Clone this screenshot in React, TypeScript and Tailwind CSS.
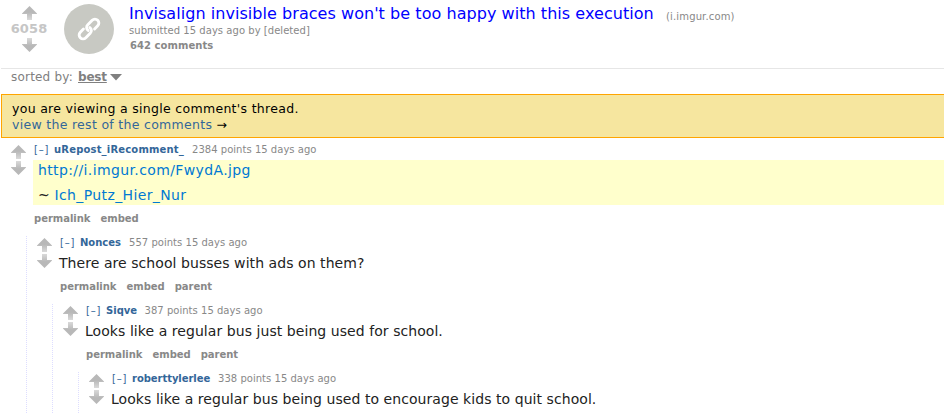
import type { ReactNode } from "react";

function Arrow({ down = false }: { down?: boolean }) {
  return (
    <svg width="15" height="14" viewBox="0 0 15 14" className={down ? "block rotate-180" : "block"}>
      <defs>
        <linearGradient id="stem" x1="0" y1="0" x2="0" y2="1">
          <stop offset="0.45" stopColor="#b8b8b8" />
          <stop offset="1" stopColor="#dadada" />
        </linearGradient>
      </defs>
      <path d="M7.5 0L15 7.5V8H10V14H5V8H0V7.5Z" fill="url(#stem)" />
    </svg>
  );
}

type CommentProps = {
  author: string;
  authorClass: string;
  meta: string;
  actions?: string[];
  root?: boolean;
  body: ReactNode;
  children?: ReactNode;
};

function Comment({ author, authorClass, meta, actions = [], root = false, body, children }: CommentProps) {
  return (
    <div>
      <div className={root ? "flex pl-[11px]" : "flex pl-[10px]"}>
        <div className="flex w-[15px] shrink-0 flex-col gap-[2px] pt-[2px]">
          <Arrow />
          <Arrow down />
        </div>
        <div className="min-w-0 flex-1 pl-[7px]">
          <div className="flex h-[13px] items-center pl-px text-[10px] leading-[13px] text-[#888]">
            <span className="w-[20px] tracking-[0.8px] text-[#369]">[–]</span>
            <span className={`font-bold text-[#369] ${authorClass}`}>{author}</span>
            <span className="tracking-[0.03px]">{meta}</span>
          </div>
          {body}
          <div className="flex h-[18px] items-center gap-[10px] pl-px text-[10px] font-bold tracking-[-0.02px] text-[#888]">
            {actions.map((action) => (
              <span key={action}>{action}</span>
            ))}
          </div>
        </div>
      </div>
      {children && (
        <div className={`mt-[9px] border-l border-dotted border-[#ddf] ${root ? "ml-[26px]" : "ml-[25px]"}`}>{children}</div>
      )}
    </div>
  );
}

function Line({ children }: { children: ReactNode }) {
  return <div className="flex h-[28px] items-center text-[14px] tracking-[0.06px] text-[#222]">{children}</div>;
}

export default function App() {
  return (
    <div className="h-[413px] w-[944px] overflow-hidden whitespace-nowrap bg-white font-['DejaVu_Sans',Verdana,sans-serif]">
      <header className="ml-px flex h-[69px] border-b border-[#e6e6e6]">
        <div className="ml-[6px] flex w-[44px] flex-col items-center pt-[6px]">
          <Arrow />
          <span className="flex h-[18px] items-center text-[13px] font-bold tracking-[0.1px] text-[#c6c6c6]">6058</span>
          <Arrow down />
        </div>
        <div className="ml-[13px] mt-1 flex size-[50px] items-center justify-center rounded-full bg-[#c8c9c3]">
          <svg width="30" height="30" viewBox="-15 -15 30 30" fill="none" stroke="#fff" strokeWidth="2.9" strokeLinecap="round">
            <g transform="rotate(-45)">
              <path d="M4 3.9H8.4A3.9 3.9 0 0 0 8.4 -3.9H2.2A3.9 3.9 0 0 0 -1.7 0.4" />
              <path d="M-4 -3.9H-8.4A3.9 3.9 0 0 0 -8.4 3.9H-2.2A3.9 3.9 0 0 0 1.7 -0.4" />
            </g>
          </svg>
        </div>
        <div className="ml-[15px] pt-1">
          <div className="flex h-[20px] items-center">
            <span className="w-[537px] text-[16px] tracking-[0.05px] text-[#0000ff]">Invisalign invisible braces won't be too happy with this execution</span>
            <span className="pt-1 text-[10px] tracking-[0.15px] text-[#888]">(i.imgur.com)</span>
          </div>
          <div className="flex h-[13px] items-center text-[10px] tracking-[0.04px] text-[#888]">submitted 15 days ago by [deleted]</div>
          <div className="flex h-[17px] items-center pl-px text-[10px] font-bold tracking-[0.05px] text-[#888]">642 comments</div>
        </div>
      </header>
      <div className="flex h-[25px] items-start pl-[11px] text-[12px] leading-[16px] text-[#808080]">
        <span className="w-[67px] tracking-[0.2px]">sorted by:</span>
        <span className="w-[29px] font-bold tracking-[-0.2px] underline">best</span>
        <svg width="12" height="7" viewBox="0 0 12 7" className="ml-[3px] mt-[5px]">
          <path d="M0 0H12L6 6.5Z" fill="#808080" />
        </svg>
      </div>
      <div className="ml-px h-[44px] border border-r-0 border-[orange] bg-[#f6e69f] pl-[10px] pt-[6px] text-[12.5px] leading-[16px] tracking-[0.3px]">
        <div className="text-black">you are viewing a single comment's thread.</div>
        <div className="text-[#369]">
          view the rest of the comments <span className="text-black">→</span>
        </div>
      </div>
      <main className="pt-[5px]">
        <Comment
          root
          author="uRepost_iRecomment_"
          authorClass="w-[138px] tracking-[0.18px]"
          meta="2384 points 15 days ago"
          actions={["permalink", "embed"]}
          body={
            <div className="my-1 h-[45px] bg-[#ffffcc] pl-[5px] text-[14px] tracking-[0.38px] text-[#222]">
              <div className="flex h-[21px] items-center text-[#0079d3]">http://i.imgur.com/FwydA.jpg</div>
              <div className="flex h-[28px] items-center">
                <span className="w-[16.5px]">~</span>
                <span className="text-[#0079d3]">Ich_Putz_Hier_Nur</span>
              </div>
            </div>
          }
        >
          <Comment
            author="Nonces"
            authorClass="w-[49px]"
            meta="557 points 15 days ago"
            actions={["permalink", "embed", "parent"]}
            body={<Line>There are school busses with ads on them?</Line>}
          >
            <Comment
              author="Siqve"
              authorClass="w-[38.5px]"
              meta="387 points 15 days ago"
              actions={["permalink", "embed", "parent"]}
              body={<Line>Looks like a regular bus just being used for school.</Line>}
            >
              <Comment
                author="roberttylerlee"
                authorClass="w-[86px] tracking-[-0.05px]"
                meta="338 points 15 days ago"
                body={<Line>Looks like a regular bus being used to encourage kids to quit school.</Line>}
              />
            </Comment>
          </Comment>
        </Comment>
      </main>
    </div>
  );
}
